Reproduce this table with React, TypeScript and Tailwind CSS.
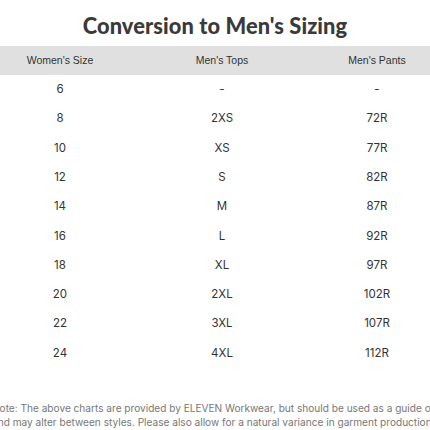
import React from "react";

const rows: [string, string, string][] = [
  ["6", "-", "-"],
  ["8", "2XS", "72R"],
  ["10", "XS", "77R"],
  ["12", "S", "82R"],
  ["14", "M", "87R"],
  ["16", "L", "92R"],
  ["18", "XL", "97R"],
  ["20", "2XL", "102R"],
  ["22", "3XL", "107R"],
  ["24", "4XL", "112R"],
];

export default function App() {
  return (
    <div className="w-[430px] h-[430px] overflow-hidden bg-white text-[#333]">
      <div className="h-[46px] flex items-center justify-center pt-[6px]">
        <h1 className="text-[21.8px] font-black text-[#3a3a3a] tracking-[0.1px] font-['Lato',sans-serif]">
          Conversion to Men's Sizing
        </h1>
      </div>
      <div className="grid grid-cols-[120px_204px_106px] h-[29px] items-center bg-[#e0e0e0] text-[10.5px] text-[#333] font-['Liberation_Sans',Arial,sans-serif]">
        <div className="text-center">Women's Size</div>
        <div className="text-center">Men's Tops</div>
        <div className="text-center">Men's Pants</div>
      </div>
      <div className="font-['Inter',sans-serif] text-[11.5px] text-[#333]">
        {rows.map((r) => (
          <div key={r[0]} className="grid grid-cols-[120px_204px_106px] h-[29.3px] items-center">
            <div className="text-center">{r[0]}</div>
            <div className="text-center">{r[1]}</div>
            <div className="text-center">{r[2]}</div>
          </div>
        ))}
      </div>
      <div className="mt-[33px] -ml-[8px] whitespace-nowrap text-[10.1px] leading-[14px] text-[#777] font-['Inter',sans-serif]">
        <p>Note: The above charts are provided by ELEVEN Workwear, but should be used as a guide only</p>
        <p>and may alter between styles. Please also allow for a natural variance in garment production.</p>
      </div>
    </div>
  );
}
